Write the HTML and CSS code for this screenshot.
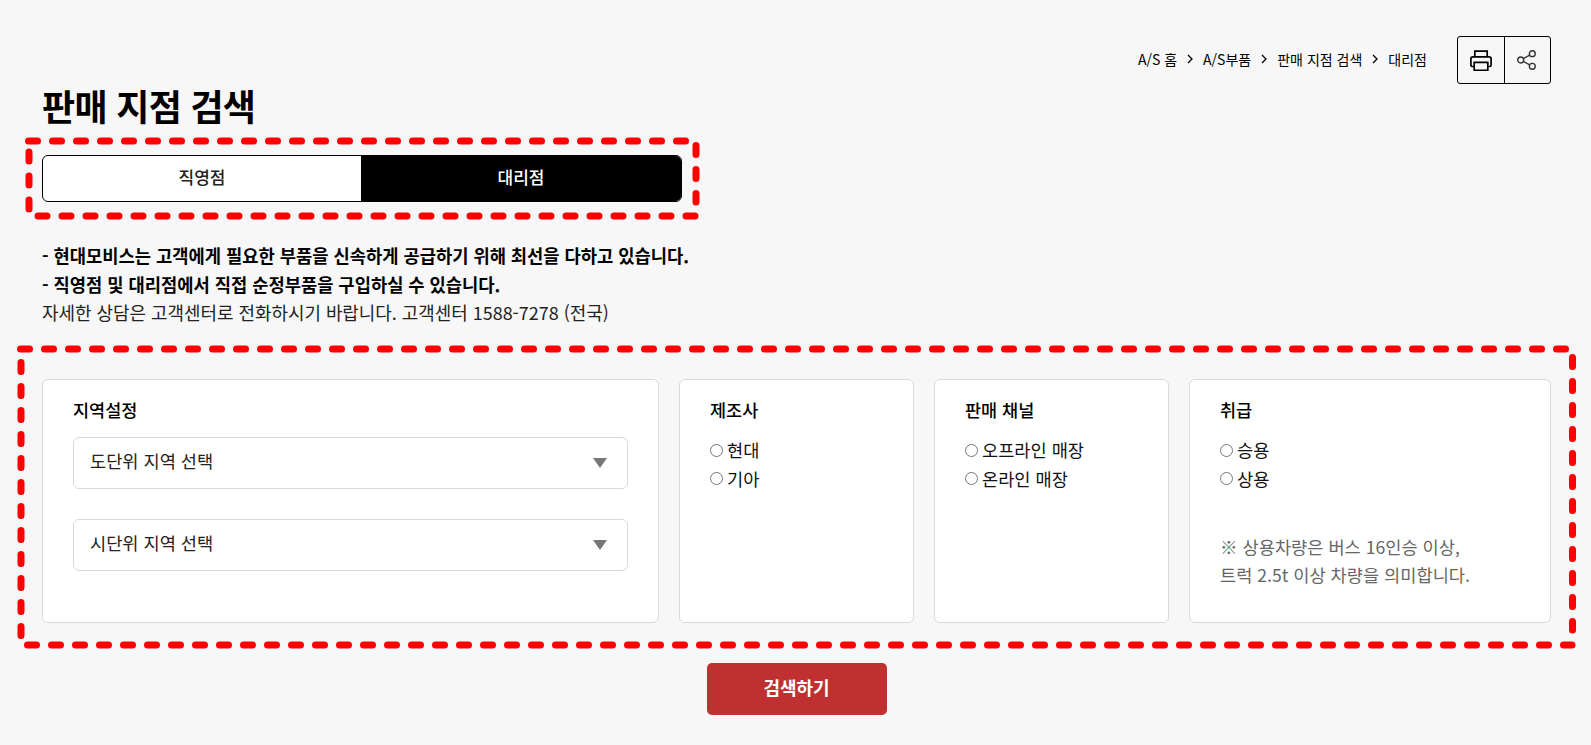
FILE: index.html
```html
<!DOCTYPE html>
<html lang="ko">
<head>
<meta charset="utf-8">
<title>판매 지점 검색</title>
<link rel="stylesheet" href="styles.css">
</head>
<body>
<main class="page">
  <header class="topbar">
    <nav class="crumbs">
      <span>A/S 홈</span>
      <svg class="chev" viewBox="0 0 8 12"><path d="M2 2l4 4-4 4"/></svg>
      <span>A/S부품</span>
      <svg class="chev" viewBox="0 0 8 12"><path d="M2 2l4 4-4 4"/></svg>
      <span>판매 지점 검색</span>
      <svg class="chev" viewBox="0 0 8 12"><path d="M2 2l4 4-4 4"/></svg>
      <span>대리점</span>
    </nav>
    <div class="tools">
      <button class="tool" type="button" aria-label="인쇄">
        <svg class="ico-print" viewBox="0 0 22 21"><path d="M4.800 6.700V1.200h12.400v5.500M4.200 16.500H2.500A1.600 1.600 0 0 1 .9 14.900V8.800a2 2 0 0 1 2-2h16.200a2 2 0 0 1 2 2v6.100a1.600 1.600 0 0 1-1.600 1.600h-1.700M4.200 12.300h13.600v8H4.200z"/></svg>
      </button>
      <button class="tool" type="button" aria-label="공유">
        <svg class="ico-share" viewBox="0 0 18 19"><circle cx="14.500" cy="3.500" r="2.800"/><circle cx="3.500" cy="9.500" r="2.800"/><circle cx="14.500" cy="15.500" r="2.800"/><path d="M6 8.100l6-3.200M6 10.900l6 3.200"/></svg>
      </button>
    </div>
  </header>

  <h1 class="title">판매 지점 검색</h1>

  <div class="tabs">
    <a class="tab tab-off">직영점</a>
    <a class="tab tab-on">대리점</a>
  </div>

  <div class="intro">
    <p class="strong">- 현대모비스는 고객에게 필요한 부품을 신속하게 공급하기 위해 최선을 다하고 있습니다.</p>
    <p class="strong">- 직영점 및 대리점에서 직접 순정부품을 구입하실 수 있습니다.</p>
    <p>자세한 상담은 고객센터로 전화하시기 바랍니다. 고객센터 1588-7278 (전국)</p>
  </div>

  <section class="filters">
    <div class="card card-region">
      <h2 class="card-title">지역설정</h2>
      <div class="select">도단위 지역 선택<i class="caret"></i></div>
      <div class="select">시단위 지역 선택<i class="caret"></i></div>
    </div>
    <div class="card card-small">
      <h2 class="card-title">제조사</h2>
      <label class="opt"><input type="radio" name="maker">현대</label>
      <label class="opt"><input type="radio" name="maker">기아</label>
    </div>
    <div class="card card-small">
      <h2 class="card-title">판매 채널</h2>
      <label class="opt"><input type="radio" name="channel">오프라인 매장</label>
      <label class="opt"><input type="radio" name="channel">온라인 매장</label>
    </div>
    <div class="card card-wide">
      <h2 class="card-title">취급</h2>
      <label class="opt"><input type="radio" name="kind">승용</label>
      <label class="opt"><input type="radio" name="kind">상용</label>
      <p class="note">※ 상용차량은 버스 16인승 이상,<br>트럭 2.5t 이상 차량을 의미합니다.</p>
    </div>
  </section>

  <div class="actions"><button class="search" type="button">검색하기</button></div>
</main>

<svg class="marks" viewBox="0 0 1591 745" aria-hidden="true">
  <path d="M28.500 141H686M38 216H695M29 152V210M696 145.500V202"/>
  <path d="M20.500 349H1566M27.500 645H1572M21 362.500V636M1572.500 357.500V630"/>
</svg>
</body>
</html>
```
FILE: styles.css
```css
* { box-sizing: border-box; }
html, body { margin: 0; padding: 0; }
body {
  background: #f7f7f7;
  color: #000;
  font-family: "Noto Sans CJK KR", "Noto Sans", sans-serif;
  height: 745px;
  overflow: hidden;
  position: relative;
}
p, h1, h2 { margin: 0; }

.page { padding: 36px 40px 0 42px; }

.topbar { display: flex; justify-content: flex-end; align-items: flex-start; height: 48px; }
.crumbs { display: flex; align-items: center; height: 48px; font-size: 14px; gap: 9px; margin-right: 30px; padding-bottom: 2px; }
.chev { width: 8px; height: 12px; fill: none; stroke: #000; stroke-width: 1.3; }
.tools { display: flex; border: 1px solid #000; border-radius: 3px; height: 48px; width: 94px; }
.tool { flex: 1; background: none; border: 0; padding: 0; display: flex; align-items: center; justify-content: center; }
.tool + .tool { border-left: 1px solid #000; }
.ico-print { width: 22px; height: 21px; fill: none; stroke: #000; stroke-width: 1.7; }
.ico-share { width: 19px; height: 20px; margin-right: 2px; fill: none; stroke: #333; stroke-width: 1.300; }

.title { font-size: 36px; font-weight: 700; line-height: 46px; margin-top: -2px; letter-spacing: -0.7px; }

.tabs { display: flex; width: 640px; height: 47px; margin-top: 27px; border: 1px solid #000; border-radius: 6px; overflow: hidden; background: #fff; }
.tab { flex: 1; display: flex; align-items: center; justify-content: center; font-size: 17px; font-weight: 500; color: #222; padding-bottom: 4px; }
.tab-off { flex: 0 0 318px; }
.tab-on { background: #000; color: #fff; }

.intro { margin-top: 39px; font-size: 17.930px; line-height: 28.500px; color: #222; }
.strong { font-weight: 700; color: #000; font-size: 17.680px; }

.filters { display: flex; gap: 20px; margin-top: 52px; height: 244px; }
.card { background: #fff; border: 1px solid #d9d9d9; border-radius: 6px; padding: 15px 30px; }
.card-region { width: 617px; }
.card-small { width: 235px; }
.card-wide { flex: 1; }
.card-title { font-size: 17.500px; font-weight: 500; line-height: 30px; margin-bottom: 11px; }
.card-region .card-title { margin-bottom: 12px; }
.select { position: relative; height: 52px; margin-bottom: 30px; border: 1px solid #d9d9d9; border-radius: 6px; padding: 0 16px; font-size: 17.600px; line-height: 45px; color: #222; }
.caret { position: absolute; right: 20px; top: 20px; border: solid transparent; border-width: 10px 7px 0; border-top-color: #777; }
.opt { display: flex; align-items: center; height: 28.500px; font-size: 17.600px; color: #111; }
.opt input { margin: 1px 4px 0 0; width: 13px; height: 13px; }
.note { margin-top: 40px; font-size: 17.600px; line-height: 28.500px; color: #666; }

.actions { display: flex; justify-content: center; margin-top: 40px; }
.search { width: 180px; height: 52px; border: 0; border-radius: 5px; padding: 0 0 4px; background: #c03030; color: #fff; font: 700 18px "Noto Sans CJK KR", sans-serif; }

.marks { position: absolute; left: 0; top: 0; width: 1591px; height: 745px; pointer-events: none; fill: none; stroke: #f00; stroke-width: 7; stroke-linecap: round; stroke-dasharray: 9 15; }
```
